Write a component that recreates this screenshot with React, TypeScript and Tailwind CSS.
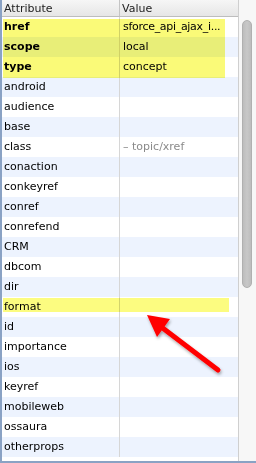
import React from "react";

type Row = { name: string; value?: string; bold?: boolean; muted?: boolean };

const rows: Row[] = [
  { name: "href", value: "sforce_api_ajax_i...", bold: true },
  { name: "scope", value: "local", bold: true },
  { name: "type", value: "concept", bold: true },
  { name: "android" },
  { name: "audience" },
  { name: "base" },
  { name: "class", value: "– topic/xref", muted: true },
  { name: "conaction" },
  { name: "conkeyref" },
  { name: "conref" },
  { name: "conrefend" },
  { name: "CRM" },
  { name: "dbcom" },
  { name: "dir" },
  { name: "format" },
  { name: "id" },
  { name: "importance" },
  { name: "ios" },
  { name: "keyref" },
  { name: "mobileweb" },
  { name: "ossaura" },
  { name: "otherprops" },
];

export default function App() {
  return (
    <div
      className="relative w-[256px] h-[463px] overflow-hidden bg-white border-l-2 border-b-2 border-[#8aa2c4] flex flex-col text-[11px] text-black"
      style={{ fontFamily: '"DejaVu Sans", sans-serif' }}
    >
      <div className="flex flex-1 min-h-0">
        <div className="w-[236px] flex flex-col">
          <div className="h-[17px] flex items-center bg-gradient-to-b from-[#f6f6f6] to-[#e6e6e6] border-b border-[#bdbdbd] text-[#222] leading-none">
            <div className="w-[118px] h-full flex items-center pl-[2px] border-r border-[#c4c4c4]">Attribute</div>
            <div className="flex-1 pl-[2px]">Value</div>
          </div>
          {rows.map((r, i) => (
            <div
              key={r.name}
              className={`h-[20px] flex leading-[20px] ${i % 2 === 1 ? "bg-[#edf3fe]" : "bg-white"}`}
            >
              <div className={`w-[118px] h-full pl-[2px] border-r border-[#d6d6d6] ${r.bold ? "font-bold" : ""}`}>
                {r.name}
              </div>
              <div
                className={`flex-1 h-full pl-[3px] whitespace-nowrap overflow-hidden ${r.muted ? "text-[#8a8a8a]" : ""} ${i === 0 ? "tracking-[-0.3px]" : ""}`}
              >
                {r.value ?? ""}
              </div>
            </div>
          ))}
        </div>
        <div className="flex-1 border-l border-[#cfcfcf] bg-[#f7f7f7] flex flex-col">
          <div className="mt-[20px] ml-[3px] w-[10px] h-[268px] rounded-full bg-gradient-to-r from-[#bdbdbd] via-[#c8c8c8] to-[#bdbdbd] border border-[#b0b0b0]" />
        </div>
      </div>

      {/* highlight annotations */}
      <div className="absolute left-[1px] top-[19px] w-[222px] h-[59px] bg-[#fafa78] mix-blend-multiply" />
      <div className="absolute left-[1px] top-[298px] w-[226px] h-[14px] bg-[#fcfc80] mix-blend-multiply" />

      {/* arrow annotation */}
      <svg className="absolute left-0 top-0" width="256" height="463" viewBox="0 0 256 463">
        <defs>
          <filter id="sh" x="-20%" y="-20%" width="140%" height="140%">
            <feDropShadow dx="1" dy="2" stdDeviation="1.5" floodColor="#000" floodOpacity="0.35" />
          </filter>
        </defs>
        <g filter="url(#sh)">
          <line x1="216" y1="370" x2="158" y2="326" stroke="#ff0000" strokeWidth="5" strokeLinecap="round" />
          <polygon points="145,315 168,319 155,337" fill="#ff0000" />
        </g>
      </svg>
    </div>
  );
}
